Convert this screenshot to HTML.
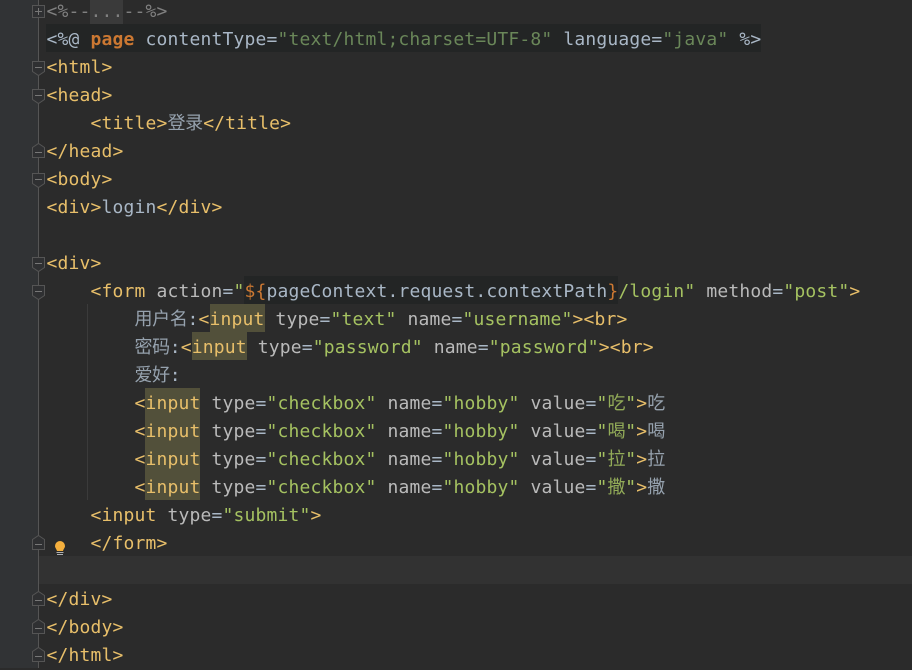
<!DOCTYPE html>
<html lang="zh">
<head>
<meta charset="utf-8">
<title>登录</title>
<style>
html,body{margin:0;padding:0;width:912px;height:668px;overflow:hidden;background:#2b2b2b}
#g{position:absolute;left:0;top:0;width:38px;height:668px;background:#313335}
.b{position:absolute}
.y{position:absolute;width:55px;height:28px;background:#52503a}
pre{position:absolute;left:46.5px;margin:0;height:28px;white-space:pre;font:18px/28px "DejaVu Sans Mono",monospace;letter-spacing:.16px;color:#a9b7c6}
.t{color:#e8bf6a}.a{color:#bababa}.s{color:#a5c261}.d{color:#6a8759}.c{color:#808080}
.k{color:#cc7832;font-weight:bold}.o{color:#cc7832}
pre.z{font-family:"Noto Sans CJK SC",sans-serif;letter-spacing:-.33px;opacity:.85}
pre.q{color:#a5c261}
svg{position:absolute;left:0;top:0}
</style>
</head>
<body>
<div id="g"></div>
<div class="b" style="left:38px;top:556px;width:874px;height:28px;background:#323232"></div>
<div class="b" style="left:46px;top:24px;width:715px;height:28px;background:#232525"></div>
<div class="b" style="left:244px;top:276px;width:374px;height:28px;background:#232525"></div>
<div class="b" style="left:90px;top:0;width:33px;height:24px;background:#3a3a3a"></div>
<div class="b" style="left:87px;top:304px;width:1px;height:196px;background:#3b3b3b"></div>
<div class="y" style="left:210px;top:304px"></div>
<div class="y" style="left:192px;top:332px"></div>
<div class="y" style="left:145px;top:388px"></div>
<div class="y" style="left:145px;top:416px"></div>
<div class="y" style="left:145px;top:444px"></div>
<div class="y" style="left:145px;top:472px"></div>
<pre style="top:-2px"><span class="c">&lt;%--...--%&gt;</span></pre>
<pre style="top:26px">&lt;%@ <span class="k">page</span> contentType=<span class="d">"text/html;charset=UTF-8"</span> language=<span class="d">"java"</span> %&gt;</pre>
<pre style="top:54px" class="t">&lt;html&gt;</pre>
<pre style="top:82px" class="t">&lt;head&gt;</pre>
<pre style="top:110px;left:90.5px" class="t">&lt;title&gt;</pre>
<pre class="z" style="top:108px;left:167.5px">登录</pre>
<pre style="top:110px;left:203.2px" class="t">&lt;/title&gt;</pre>
<pre style="top:138px" class="t">&lt;/head&gt;</pre>
<pre style="top:166px" class="t">&lt;body&gt;</pre>
<pre style="top:194px"><span class="t">&lt;div&gt;</span>login<span class="t">&lt;/div&gt;</span></pre>
<pre style="top:250px" class="t">&lt;div&gt;</pre>
<pre style="top:278px">    <span class="t">&lt;form</span> <span class="a">action</span>=<span class="s">"</span><span class="o">${</span>pageContext.request.contextPath<span class="o">}</span><span class="s">/login"</span> <span class="a">method</span>=<span class="s">"post"</span><span class="t">&gt;</span></pre>

<pre class="z" style="top:304px;left:134.5px">用户名</pre>
<pre style="top:306px;left:187.5px">:<span class="t">&lt;input</span> <span class="a">type</span>=<span class="s">"text"</span> <span class="a">name</span>=<span class="s">"username"</span><span class="t">&gt;&lt;br&gt;</span></pre>

<pre class="z" style="top:332px;left:134.5px">密码</pre>
<pre style="top:334px;left:169.800px">:<span class="t">&lt;input</span> <span class="a">type</span>=<span class="s">"password"</span> <span class="a">name</span>=<span class="s">"password"</span><span class="t">&gt;&lt;br&gt;</span></pre>

<pre class="z" style="top:360px;left:134.5px">爱好</pre>
<pre style="top:362px;left:169.800px">:</pre>

<pre style="top:390px;left:134.5px"><span class="t">&lt;input</span> <span class="a">type</span>=<span class="s">"checkbox"</span> <span class="a">name</span>=<span class="s">"hobby"</span> <span class="a">value</span>=<span class="s">"</span></pre>
<pre class="z q" style="top:388px;left:607.5px">吃</pre>
<pre style="top:390px;left:625.2px"><span class="s">"</span><span class="t">&gt;</span></pre>
<pre class="z" style="top:388px;left:647.2px">吃</pre>

<pre style="top:418px;left:134.5px"><span class="t">&lt;input</span> <span class="a">type</span>=<span class="s">"checkbox"</span> <span class="a">name</span>=<span class="s">"hobby"</span> <span class="a">value</span>=<span class="s">"</span></pre>
<pre class="z q" style="top:416px;left:607.5px">喝</pre>
<pre style="top:418px;left:625.2px"><span class="s">"</span><span class="t">&gt;</span></pre>
<pre class="z" style="top:416px;left:647.2px">喝</pre>

<pre style="top:446px;left:134.5px"><span class="t">&lt;input</span> <span class="a">type</span>=<span class="s">"checkbox"</span> <span class="a">name</span>=<span class="s">"hobby"</span> <span class="a">value</span>=<span class="s">"</span></pre>
<pre class="z q" style="top:444px;left:607.5px">拉</pre>
<pre style="top:446px;left:625.2px"><span class="s">"</span><span class="t">&gt;</span></pre>
<pre class="z" style="top:444px;left:647.2px">拉</pre>

<pre style="top:474px;left:134.5px"><span class="t">&lt;input</span> <span class="a">type</span>=<span class="s">"checkbox"</span> <span class="a">name</span>=<span class="s">"hobby"</span> <span class="a">value</span>=<span class="s">"</span></pre>
<pre class="z q" style="top:472px;left:607.5px">撒</pre>
<pre style="top:474px;left:625.2px"><span class="s">"</span><span class="t">&gt;</span></pre>
<pre class="z" style="top:472px;left:647.2px">撒</pre>

<pre style="top:502px">    <span class="t">&lt;input</span> <span class="a">type</span>=<span class="s">"submit"</span><span class="t">&gt;</span></pre>
<pre style="top:530px">    <span class="t">&lt;/form&gt;</span></pre>
<pre style="top:586px" class="t">&lt;/div&gt;</pre>
<pre style="top:614px" class="t">&lt;/body&gt;</pre>
<pre style="top:642px" class="t">&lt;/html&gt;</pre>
<svg width="912" height="668" viewBox="0 0 912 668" fill="none" stroke="#555" stroke-width="1">
<path d="M38.500 0V668"/>
<g fill="#2f3032">
<path d="M32.500 5.500h12v12h-12z"/>
<path d="M32.500 61.500h12v10l-6 4-6-4z"/>
<path d="M32.500 89.500h12v10l-6 4-6-4z"/>
<path d="M32.500 173.500h12v10l-6 4-6-4z"/>
<path d="M32.500 257.500h12v10l-6 4-6-4z"/>
<path d="M32.500 285.500h12v10l-6 4-6-4z"/>
<path d="M32.500 157.500h12v-10l-6-4-6 4z"/>
<path d="M32.500 549.500h12v-10l-6-4-6 4z"/>
<path d="M32.500 605.500h12v-10l-6-4-6 4z"/>
<path d="M32.500 633.500h12v-10l-6-4-6 4z"/>
<path d="M32.500 661.500h12v-10l-6-4-6 4z"/>
</g>
<path d="M35 11.500h7M38.500 8v7M35 67.500h7M35 95.500h7M35 179.500h7M35 263.500h7M35 291.500h7M35 152.500h7M35 544.500h7M35 600.500h7M35 628.500h7M35 656.500h7" stroke="#777"/>
<path d="M55 546a5 5 0 1 1 10 0c0 1.800-1.500 3-2 5h-6c-.5-2-2-3.200-2-5z" fill="#f4af3d" stroke="none"/>
<path d="M56.500 552.500h7M57 554.500h6" stroke="#afb1b3"/>
</svg>
</body>
</html>
